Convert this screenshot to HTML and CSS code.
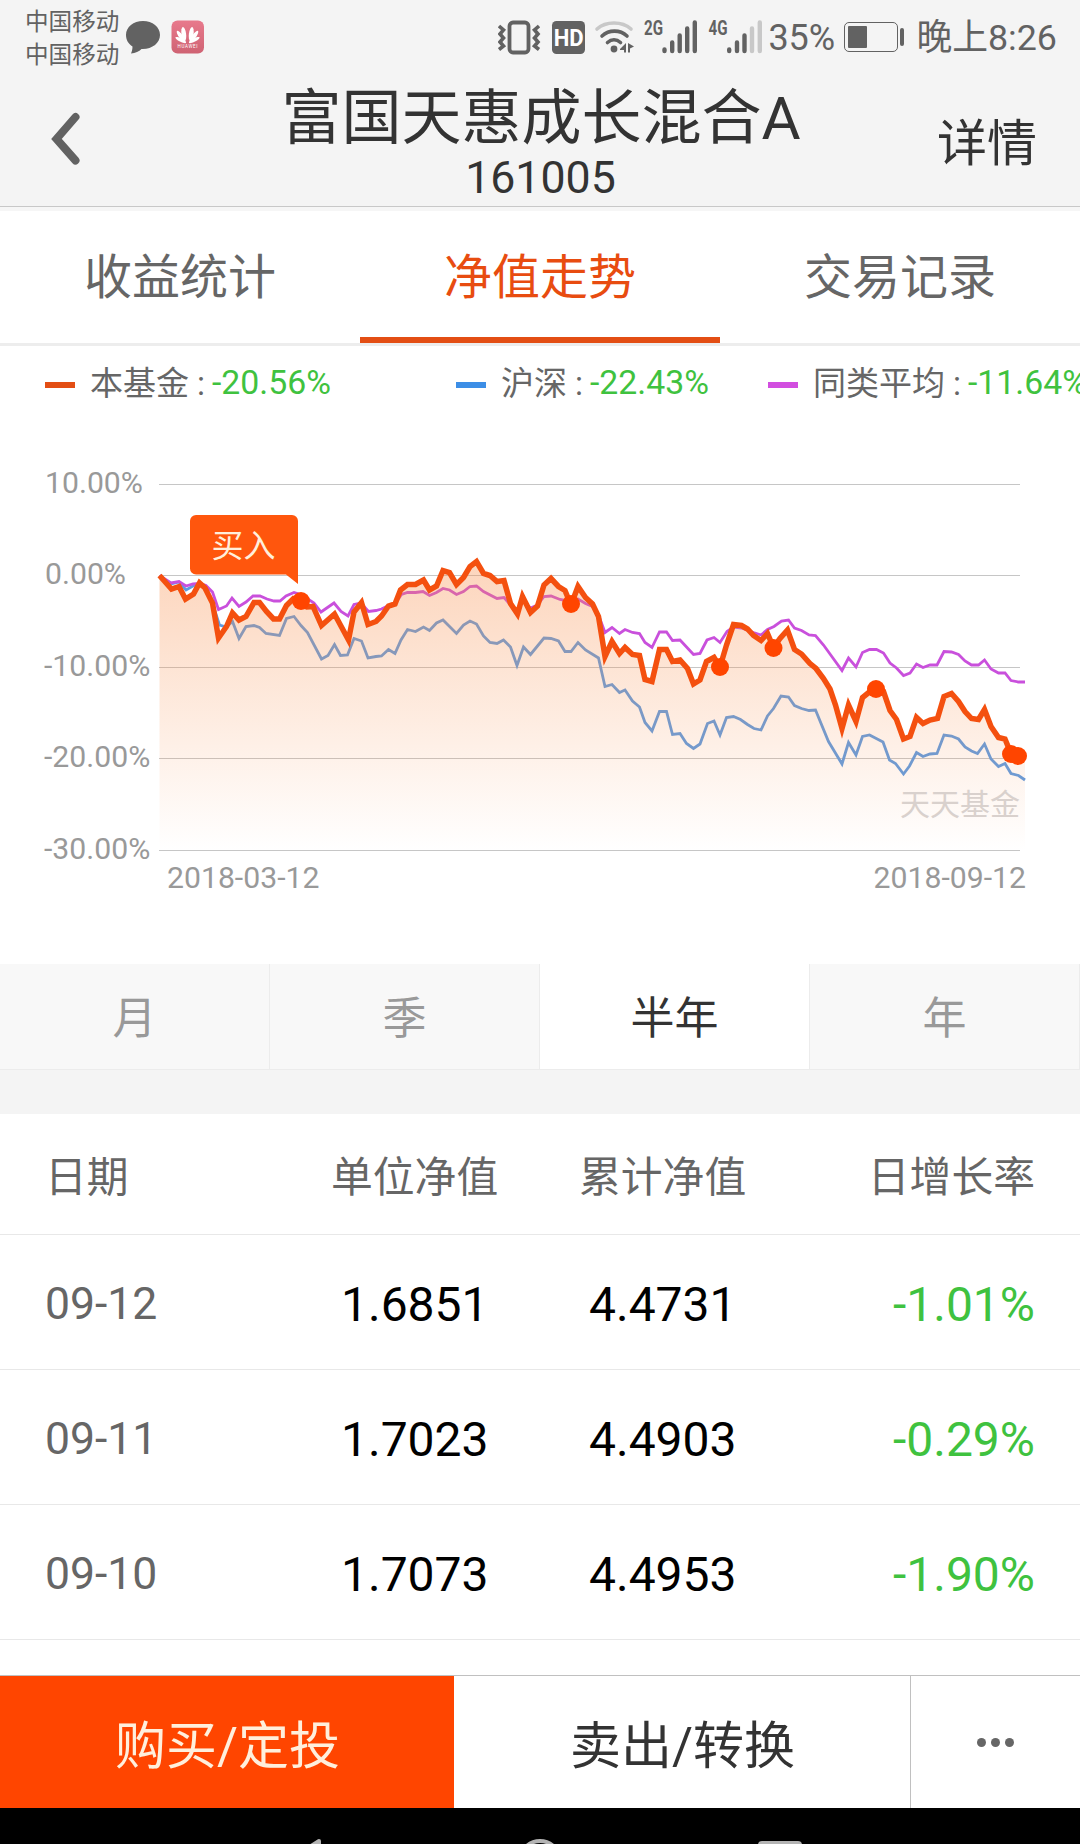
FILE: index.html
```html
<!DOCTYPE html>
<html lang="zh-CN">
<head>
    <meta charset="UTF-8" />
    <title>富国天惠成长混合A</title>
    <link rel="stylesheet" href="styles.css">
</head>
<body>
    <div class="status-bar">
        <div class="carriers">
            <span>中国移动</span>
            <span>中国移动</span>
        </div>
        <svg class="notice-icons" width="80" height="34" viewBox="125 20 80 34">
            <path d="M143 21c-9.500 0-17 6-17 14 0 5 2.500 9 6.500 11.500 0 2.500-.5 4.500-1.500 7 4.500-.5 8-2 10.500-4.500 10.500.5 18.500-6 18.500-14s-7.500-14-17-14z" fill="#626262"/>
            <defs>
                <linearGradient id="pink" x1="0" y1="0" x2="0" y2="1">
                    <stop offset="0" stop-color="#e8798c"/>
                    <stop offset="1" stop-color="#cf6373"/>
                </linearGradient>
            </defs>
            <rect x="171.500" y="20.500" width="32.500" height="33" rx="6" fill="url(#pink)"/>
            <g fill="#fff">
                <ellipse cx="184.800" cy="33.500" rx="2.300" ry="7" transform="rotate(-8 187 41)"/>
                <ellipse cx="184.800" cy="34" rx="2" ry="7" transform="rotate(-36 187 41)"/>
                <ellipse cx="185" cy="35" rx="1.700" ry="6" transform="rotate(-63 187 41)"/>
                <ellipse cx="190.200" cy="33.500" rx="2.300" ry="7" transform="rotate(8 188 41)"/>
                <ellipse cx="190.200" cy="34" rx="2" ry="7" transform="rotate(36 188 41)"/>
                <ellipse cx="190" cy="35" rx="1.700" ry="6" transform="rotate(63 188 41)"/>
            </g>
            <text x="187.500" y="47.500" class="brand" textLength="20">HUAWEI</text>
        </svg>
        <svg class="system-icons" width="270" height="56" viewBox="498 8 270 56">
            <g fill="none" stroke="#626262" stroke-width="3">
                <rect x="509.500" y="21.500" width="19" height="30" rx="3.500" stroke-width="3.800"/>
                <path d="M499 25l4.500 4-3.500 4 3.500 4-3.500 4 3.500 4-4.500 3.500M539 25l-4.500 4 3.500 4-3.500 4 3.500 4-3.500 4 4.500 3.500" stroke-width="3.600"/>
            </g>
            <rect x="552" y="20" width="33" height="33" rx="4.500" fill="#626262"/>
            <text x="568.700" y="44.500" class="hd" textLength="30" lengthAdjust="spacingAndGlyphs">HD</text>
            <g fill="none" stroke="#626262" stroke-width="3.600" stroke-linecap="round">
                <path d="M597 28c9-8 25-8 34 0" stroke="#c8c8c8"/>
                <path d="M602 35c7-6.500 18-6.500 25 0"/>
                <path d="M607.500 41.500c4-3.500 9-3.500 13 0"/>
            </g>
            <circle cx="614" cy="48" r="3.400" fill="#626262"/>
            <path d="M620 48l6-6v9.500h-2v-2.500h-4zM628 42l6 3.500-4 2v4h-2z" fill="#626262"/>
            <text x="644" y="34" class="net" textLength="19" lengthAdjust="spacingAndGlyphs">2G</text>
            <g stroke="#626262" stroke-width="4.400" stroke-linecap="round">
                <path d="M664.500 48.500v1.500M672.200 41.500v8.500M679.700 34.500v15.500M687.200 27.500v22.500M694.800 21.500v28.500"/>
                <path d="M729.200 48.500v1.500M737 41.500v8.500M744.500 34.500v15.500"/>
                <path d="M752 27.500v22.500M759.800 21.500v28.500" stroke="#c8c8c8"/>
            </g>
            <text x="708.500" y="34" class="net" textLength="19" lengthAdjust="spacingAndGlyphs">4G</text>
        </svg>
        <span class="battery-level">35%</span>
        <div class="battery"><div class="battery-fill"></div></div>
        <div class="battery-cap"></div>
        <span class="clock">晚上8:26</span>
    </div>

    <header class="header">
        <svg class="back" width="30" height="54" viewBox="0 0 30 54">
            <path d="M24.500 5L5.500 27l19 21.500" fill="none" stroke="#626262" stroke-width="8" stroke-linecap="round" stroke-linejoin="miter"/>
        </svg>
        <div class="title">
            <h1>富国天惠成长混合A</h1>
            <p>161005</p>
        </div>
        <a class="detail">详情</a>
    </header>

    <nav class="tabs">
        <a>收益统计</a>
        <a class="active">净值走势</a>
        <a>交易记录</a>
    </nav>

    <div class="legend">
        <div class="legend-item fund"><i></i>本基金<b>:</b><em>-20.56%</em></div>
        <div class="legend-item index"><i></i>沪深<b>:</b><em>-22.43%</em></div>
        <div class="legend-item average"><i></i>同类平均<b>:</b><em>-11.64%</em></div>
    </div>

    <svg class="chart" width="1080" height="544" viewBox="0 420 1080 544">
        <defs>
            <linearGradient id="area" gradientUnits="userSpaceOnUse" x1="0" y1="560" x2="0" y2="850">
                <stop offset="0" stop-color="#f8904e" stop-opacity=".38"/>
                <stop offset="1" stop-color="#f8904e" stop-opacity="0"/>
            </linearGradient>
        </defs>
        <path class="grid" d="M159 484.500H1020M159 575.500H1020M159 667.500H1020M159 758.500H1020M159 850.500H1020"/>
        <g class="axis">
            <text x="45" y="493">10.00%</text>
            <text x="45" y="584">0.00%</text>
            <text x="44" y="676">-10.00%</text>
            <text x="44" y="767">-20.00%</text>
            <text x="44" y="859">-30.00%</text>
            <text x="167" y="888">2018-03-12</text>
            <text x="1026" y="888" text-anchor="end">2018-09-12</text>
        </g>
        <!-- 沪深 -->
        <polyline class="line index-line" points="159.500,576 171,584 179,582 186,590 193,586 200,583 207,590 212,602 219.500,625 226.500,627 232.500,621.500 239,638.500 246,626.500 254,625.500 259.500,627.500 266,633.500 279.500,635.500 286.500,618.500 294,616.500 301,625.500 307.500,632.500 321.500,659 328,655.500 334.500,644.500 340.500,655.500 347.500,655 354,638.500 361.500,641 368,658 376,656.500 381.500,656 388.500,649.500 395,653.500 401,640 407.500,629.500 415.500,631.500 423.500,627 429.500,630.500 436.500,623 443,620 456.500,633.500 463.500,625 470,621 476.500,624 483.500,636 490,642.500 497,643.500 503.500,640 510.500,647 517,665.500 523.500,647 530.500,654.500 544,638 551,638.500 558.500,641 565,651.500 571,651.500 578,642.500 585.500,650 598.500,658 605,686.500 612,684.500 619.500,692.500 625,690 632.500,701 639.500,707 645,722.500 652,731 659.500,711.500 666.500,711.500 672.500,734.500 680,733.500 686.500,743.500 693.500,748.500 700,744 707.500,723.500 714,721 720,735 726.500,717.500 733.500,716.500 740.500,719.500 747.500,724.500 754,728.500 761,730 767.500,716 773.500,708.500 781,696 788.500,697 794.500,705.500 801.500,708.500 809,710.500 815.500,710 828.500,741.500 842,764 848.500,742.500 856,755 862.500,736.500 869.500,735 883,742 889.500,760 895.500,763.500 903.500,774 909.500,766 916.500,752.500 923,756.500 930,754 937,753.500 944,735 951.500,736 958.500,739 965,747 971.500,751 977.500,753.500 984.500,744 991,759 998.500,766.500 1005,763.500 1011,773.500 1018.500,775.500 1025,780"/>
        <!-- 同类平均 -->
        <polyline class="line average-line" points="159.500,575.500 171,583 179,581.500 186,586 193,584 200,583.500 206,585.500 212.500,592 218.500,609.500 226.500,606 232,598 239,606.500 246,602 253,596 260,596 267,599 274,601 280,601 286,596 294,592.500 302,595 314,603 321,612 334,603 341,611.500 348,616 354,604.500 361,603 368.500,611.500 376,610.500 381.500,609 388.500,605.500 395,604 401.500,594.500 407.500,592.500 415.500,592.500 423,591.500 429.500,595.500 436.500,592.500 443,588.500 449.500,590 456.500,594.500 463.500,591.500 470,586.500 476.500,586 483.500,591.500 497,598.500 504,597.500 510.500,605 517.500,611 522.500,600.500 530.500,608 537.500,605 544,596.500 551,596 560,599.500 571,601.500 578,599 585.500,603.500 592.500,606.500 598.500,615 605,632.500 612,627.500 619.500,633.500 625,629.500 632.500,632.500 639.500,633.500 645,642.500 652,647.500 659.500,632 666.500,632 672.500,640.500 680,640 693.500,654.500 700,653.500 707,640 714,637.500 720,642.500 727,631.500 733.500,627 741.500,628 753.500,632.500 761,635 767.500,629.500 774,626.500 781.500,621 788.500,620 794.500,628 801.500,630.500 809,635 815.500,635.500 823.500,645 842,670.500 848.500,658 856,667 862.500,652.500 869.500,649.500 876.500,649.500 883.500,653 890,663 896.500,668 903.500,675.500 910,673 916.500,664 923,667.500 930,665 937,665 944,651.500 951.500,652 958.500,654.500 965,661 971.500,665 978.500,665 984.500,660 991,669 998.500,673 1005,673 1011,680.500 1018.500,682 1025,682"/>
        <!-- 本基金 -->
        <polygon fill="url(#area)" points="159.500,850 159.500,575.500 171.500,589 179,586.500 185.500,599 193.500,594 199.500,583 205,588 212.500,603 218.500,638 226.500,626.500 232.500,613 239,620 246,616.500 254,602.500 259.500,602.500 266.500,611.500 273.500,619 279.500,619 286.500,605.500 293.500,598.500 301,600.500 307,607 313,606.500 321.500,625.500 334.500,614 348.500,640 354,612 361.500,602.500 368,624.500 376,621.500 381.500,616 388.500,606 395,604 400.500,590 407.500,584.500 415.500,584.500 423.500,580 429.500,590 436.500,586 443,570.500 449.500,572.500 456.500,584.500 463.500,577.500 470,566.500 476.500,561.500 483.500,573.500 490,575.500 497,581.500 504,580.500 510.500,603.500 517.500,614 522.500,596.500 530.500,612.500 537.500,606 544,585 551,578.500 558.500,586.500 565,590.500 571,605 578,586.500 585.500,597.500 592.500,604 598.500,616.500 605,656.500 612,641.500 619.500,653.500 625,647.500 632.500,654.500 639.500,655.500 645,679.500 652,681.500 659.500,649.500 666.500,649.500 672.500,661.500 680,660 687.500,668.500 693.500,684 700,680 706.500,661.500 714,657.500 720,667 726.500,645 733.500,624.500 741.500,625.500 747.500,629 753.500,635.500 761,640.500 767.500,633.500 773.500,647.500 780,638.500 787.500,630 794.500,649.500 801.500,654 810,663.500 816,668.500 823.500,678.500 830,689 835.500,705 842,728.500 848.500,705 856,721.500 862.500,697.500 870,691.500 876,689 883.500,691.500 890,710.500 896.500,719.500 903.500,739 910,736.500 916.500,717.500 923,723.500 930,720 937.500,718.500 944,696.500 951.500,693.500 958.500,701.500 965,711.500 971.500,718.500 978.500,719.500 984.500,709.500 991,726.500 998.500,737.500 1005,739 1011,753.500 1018.500,756 1025,757 1025,850"/>
        <polyline class="line fund-line" points="159.500,575.500 171.500,589 179,586.500 185.500,599 193.500,594 199.500,583 205,588 212.500,603 218.500,638 226.500,626.500 232.500,613 239,620 246,616.500 254,602.500 259.500,602.500 266.500,611.500 273.500,619 279.500,619 286.500,605.500 293.500,598.500 301,600.500 307,607 313,606.500 321.500,625.500 334.500,614 348.500,640 354,612 361.500,602.500 368,624.500 376,621.500 381.500,616 388.500,606 395,604 400.500,590 407.500,584.500 415.500,584.500 423.500,580 429.500,590 436.500,586 443,570.500 449.500,572.500 456.500,584.500 463.500,577.500 470,566.500 476.500,561.500 483.500,573.500 490,575.500 497,581.500 504,580.500 510.500,603.500 517.500,614 522.500,596.500 530.500,612.500 537.500,606 544,585 551,578.500 558.500,586.500 565,590.500 571,605 578,586.500 585.500,597.500 592.500,604 598.500,616.500 605,656.500 612,641.500 619.500,653.500 625,647.500 632.500,654.500 639.500,655.500 645,679.500 652,681.500 659.500,649.500 666.500,649.500 672.500,661.500 680,660 687.500,668.500 693.500,684 700,680 706.500,661.500 714,657.500 720,667 726.500,645 733.500,624.500 741.500,625.500 747.500,629 753.500,635.500 761,640.500 767.500,633.500 773.500,647.500 780,638.500 787.500,630 794.500,649.500 801.500,654 810,663.500 816,668.500 823.500,678.500 830,689 835.500,705 842,728.500 848.500,705 856,721.500 862.500,697.500 870,691.500 876,689 883.500,691.500 890,710.500 896.500,719.500 903.500,739 910,736.500 916.500,717.500 923,723.500 930,720 937.500,718.500 944,696.500 951.500,693.500 958.500,701.500 965,711.500 971.500,718.500 978.500,719.500 984.500,709.500 991,726.500 998.500,737.500 1005,739 1011,753.500 1018.500,756"/>
        <g class="trades">
            <circle cx="301" cy="601" r="9"/>
            <circle cx="571" cy="604" r="9"/>
            <circle cx="720" cy="667" r="9"/>
            <circle cx="773.500" cy="648" r="9"/>
            <circle cx="876" cy="689" r="9"/>
            <circle cx="1011" cy="754" r="9"/>
            <circle cx="1018" cy="756" r="9"/>
        </g>
        <path d="M196 515H292a6 6 0 0 1 6 6V584L286 574.500H196a6 6 0 0 1-6-6V521a6 6 0 0 1 6-6z" fill="#ff560d"/>
        <text x="243.500" y="557" class="trade-label">买入</text>
        <text x="1020" y="815" class="watermark">天天基金</text>
    </svg>

    <div class="periods">
        <a>月</a>
        <a>季</a>
        <a class="active">半年</a>
        <a>年</a>
    </div>

    <div class="history">
        <div class="row head">
            <span>日期</span><span>单位净值</span><span>累计净值</span><span>日增长率</span>
        </div>
        <div class="row">
            <span>09-12</span><span>1.6851</span><span>4.4731</span><span>-1.01%</span>
        </div>
        <div class="row">
            <span>09-11</span><span>1.7023</span><span>4.4903</span><span>-0.29%</span>
        </div>
        <div class="row">
            <span>09-10</span><span>1.7073</span><span>4.4953</span><span>-1.90%</span>
        </div>
    </div>

    <div class="actions">
        <a class="buy">购买/定投</a>
        <a class="sell">卖出/转换</a>
        <a class="more"><i></i><i></i><i></i></a>
    </div>

    <div class="nav-bar">
        <svg width="1080" height="36" viewBox="0 1808 1080 36">
            <g fill="none" stroke="#b4b4b4" stroke-width="4">
                <path d="M319 1841L292 1858L319 1874Z" stroke-linejoin="round"/>
                <circle cx="540" cy="1861" r="20"/>
                <rect x="760" y="1843" width="40" height="40" rx="2"/>
            </g>
        </svg>
    </div>
</body>
</html>
```
FILE: styles.css
```css
/* Base */
* {
    box-sizing: border-box;
}

body {
    margin: 0;
    width: 1080px;
    height: 1844px;
    overflow: hidden;
    background-color: #fff;
    color: #333;
    font-family: Roboto, "Noto Sans CJK SC", sans-serif;
    display: flex;
    flex-direction: column;
}

h1, p {
    margin: 0;
    font-weight: normal;
}

i, em, b {
    font-style: normal;
    font-weight: normal;
}

/* Status bar */
.status-bar {
    height: 74px;
    padding: 0 23px 0 25px;
    background-color: #f4f4f4;
    color: #626262;
    display: flex;
    align-items: center;
}

.carriers {
    width: 100px;
    padding-top: 4px;
    font-size: 23.600px;
    line-height: 33px;
    display: flex;
    flex-direction: column;
}

.system-icons {
    margin-left: auto;
}

.brand {
    fill: #fff;
    font-size: 4.500px;
    text-anchor: middle;
}

.hd {
    fill: #fff;
    font-size: 23px;
    font-weight: bold;
    text-anchor: middle;
}

.net {
    fill: #626262;
    font-size: 20.500px;
    font-weight: bold;
}

.battery-level {
    width: 76px;
    padding-top: 2px;
    font-size: 36px;
}

.battery {
    width: 54px;
    height: 30px;
    padding: 3px;
    border: 1.500px solid #626262;
    border-radius: 5px;
}

.battery-fill {
    width: 19px;
    height: 100%;
    border-radius: 1px;
    background-color: #626262;
}

.battery-cap {
    width: 4px;
    height: 18px;
    margin: 0 12px 0 2px;
    border-radius: 2px;
    background-color: #626262;
}

.clock {
    padding-top: 2px;
    font-size: 35.800px;
    line-height: 40px;
    white-space: nowrap;
}

/* Header */
.header {
    height: 137px;
    padding: 0 43px 4px 51px;
    background-color: #f4f4f4;
    display: grid;
    grid-template-columns: 180px 1fr 180px;
    box-shadow: inset 0 -4px #f6f6f6, inset 0 -5px #c8c8c8;
}

.back {
    margin-top: 38px;
}

.title {
    padding-right: 6px;
    text-align: center;
}

.title h1 {
    margin: 10px -20px 0;
    font-size: 60px;
    line-height: 70px;
    white-space: nowrap;
}

.title p {
    margin-top: -2px;
    padding-right: 1px;
    font-size: 44.700px;
    line-height: 53px;
}

.detail {
    margin-top: 40px;
    font-size: 50px;
    line-height: 60px;
    text-align: right;
}

/* Tabs */
.tabs {
    height: 135px;
    display: flex;
    border-bottom: 3px solid #ededed;
}

.tabs a {
    flex: 1;
    padding-top: 37px;
    font-size: 48px;
    line-height: 60px;
    text-align: center;
    color: #666;
}

.tabs .active {
    color: #e84c10;
    border-bottom: 6px solid #e34e14;
}

/* Legend */
.legend {
    height: 74px;
    padding: 0 0 0 45px;
    display: flex;
    font-size: 33px;
    line-height: 42px;
    color: #666;
    white-space: nowrap;
    overflow: hidden;
}

.legend-item {
    height: 75px;
    flex: none;
    display: flex;
    align-items: center;
}

.legend-item.fund {
    width: 411px;
}

.legend-item.index {
    width: 312px;
}

.legend-item i {
    width: 30px;
    height: 6px;
    margin: 3px 15px 0 0;
}

.legend-item b {
    width: 23px;
    padding-left: 8px;
}

.legend-item em {
    margin-top: -2px;
    font-size: 33.800px;
    color: #3fc23f;
}

.fund i {
    background-color: #e34e14;
}

.index i {
    background-color: #3c8ee6;
}

.average i {
    background-color: #d24ee0;
}

/* Chart */
.chart {
    display: block;
    flex: none;
}

.grid {
    stroke: #c6c6c6;
    stroke-width: 1;
}

.axis text {
    fill: #999;
    font-size: 30.200px;
}

.line {
    fill: none;
}

.index-line {
    stroke: #5f9be0;
    stroke-width: 2.800;
}

.average-line {
    stroke: #c950dc;
    stroke-width: 2.800;
}

.fund-line {
    stroke: #f4500f;
    stroke-width: 5.500;
}

.trades circle {
    fill: #ff4500;
}

.trade-label {
    fill: #ffefdc;
    font-size: 32px;
    text-anchor: middle;
}

.watermark {
    fill: #d9d1cd;
    font-size: 30px;
    text-anchor: end;
}

/* Period switch */
.periods {
    height: 150px;
    flex: none;
    padding-bottom: 44px;
    background-color: #f4f4f4;
    display: flex;
}

.periods a {
    flex: 1;
    background-color: #f8f8f8;
    border-right: 1px solid #ececec;
    border-bottom: 1px solid #ececec;
    padding-top: 5px;
    font-size: 44px;
    line-height: 100px;
    text-align: center;
    color: #999;
}

.periods .active {
    background-color: #fff;
    color: #333;
}

/* NAV history */
.row {
    height: 135px;
    padding: 4px 45px 0;
    border-bottom: 1px solid #e8e8e8;
    display: grid;
    grid-template-columns: 296px 248px 1fr 200px;
    align-items: center;
    font-size: 48px;
    color: #000;
}

.row span:first-child {
    font-size: 44.500px;
    color: #666;
}

.row span:last-child {
    text-align: right;
    color: #3fc23f;
}

.row.head {
    height: 121px;
    padding-top: 7px;
    grid-template-columns: 286px 248px 1fr 200px;
    font-size: 41.800px;
}

.row.head span {
    font-size: 41.800px;
    line-height: 50px;
    color: #666;
}

/* Bottom actions */
.actions {
    height: 133px;
    margin-top: auto;
    border-top: 1px solid #c0c0c0;
    display: flex;
    font-size: 51px;
    line-height: 126px;
    text-align: center;
}

.buy {
    width: 454px;
    padding: 8px 0 0 1px;
    background-color: #ff4500;
    color: #ffefdc;
}

.sell {
    width: 457px;
    padding: 8px 0 0 1px;
    border-right: 1px solid #c0c0c0;
}

.more {
    flex: 1;
    display: flex;
    align-items: center;
    justify-content: center;
    gap: 5px;
}

.more i {
    width: 9px;
    height: 9px;
    border-radius: 50%;
    background-color: #666;
}

.nav-bar {
    height: 36px;
    background-color: #000;
}
```
